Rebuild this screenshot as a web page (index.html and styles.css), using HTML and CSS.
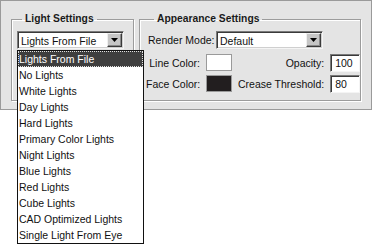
FILE: index.html
```html
<!DOCTYPE html>
<html>
<head>
<meta charset="utf-8">
<link rel="stylesheet" href="styles.css">
</head>
<body>
<div class="panel">
  <fieldset class="group group-light">
    <legend class="legend legend-light">Light Settings</legend>
    <div class="combo combo-light">
      <div class="select">
        <span class="select-value">Lights From File</span>
        <span class="arrow-btn"><svg width="7" height="4" viewBox="0 0 7 4"><path d="M0 0H7L3.5 4Z" fill="#000"/></svg></span>
      </div>
      <ul class="dropdown">
        <li class="item item-active">Lights From File</li>
        <li class="item">No Lights</li>
        <li class="item">White Lights</li>
        <li class="item">Day Lights</li>
        <li class="item">Hard Lights</li>
        <li class="item">Primary Color Lights</li>
        <li class="item">Night Lights</li>
        <li class="item">Blue Lights</li>
        <li class="item">Red Lights</li>
        <li class="item">Cube Lights</li>
        <li class="item">CAD Optimized Lights</li>
        <li class="item">Single Light From Eye</li>
      </ul>
    </div>
  </fieldset>
  <fieldset class="group group-appearance">
    <legend class="legend legend-appearance">Appearance Settings</legend>
    <div class="row-render">
      <span class="label label-render">Render Mode:</span>
      <div class="select select-render">
        <span class="select-value">Default</span>
        <span class="arrow-btn"><svg width="7" height="4" viewBox="0 0 7 4"><path d="M0 0H7L3.5 4Z" fill="#000"/></svg></span>
      </div>
    </div>
    <div class="props">
      <span class="label label-right">Line Color:</span>
      <span class="swatch swatch-white"></span>
      <span class="label label-right">Opacity:</span>
      <span class="field">100</span>
      <span class="label label-right">Face Color:</span>
      <span class="swatch swatch-dark"></span>
      <span class="label label-right">Crease Threshold:</span>
      <span class="field">80</span>
    </div>
  </fieldset>
</div>
</body>
</html>
```

FILE: styles.css
```css
* { box-sizing: border-box; }
html, body { margin: 0; padding: 0; background: #fff; }
body {
  width: 372px;
  height: 246px;
  overflow: hidden;
  font-family: "Liberation Sans", Arial, sans-serif;
  font-size: 10.5px;
  color: #111;
}
.panel {
  height: 110px;
  background: #e4e4e4;
  border: 1px solid #9a9a9a;
  padding: 12px 0 0 10px;
  display: flex;
  gap: 5px;
  align-items: flex-start;
}
.group {
  margin: 0;
  padding: 0;
  min-width: 0;
  height: 88px;
  border: 1px solid #9c9c9c;
  box-shadow: 1px 1px 0 #fff, inset 1px 1px 0 #fff;
}
.group-light { width: 123px; }
.group-appearance { width: 222px; }
.legend {
  font-weight: bold;
  font-size: 10.3px;
  line-height: 12px;
  padding: 0 3px;
  color: #1a1a1a;
}
.legend-light { margin-left: 10px; }
.legend-appearance { margin-left: 14px; }

.combo { position: relative; }
.combo-light { margin: 6px 0 0 5px; width: 107px; }
.select {
  position: relative;
  width: 107px;
  height: 18px;
  background: #fff;
  border-top: 1px solid #7a7a7a;
  border-left: 1px solid #7a7a7a;
  border-right: 1px solid #f4f4f4;
  border-bottom: 1px solid #f4f4f4;
  box-shadow: inset 1px 1px 0 #3a3a3a, inset -1px -1px 0 #cfcfcf;
  display: flex;
  align-items: center;
  padding: 1px 1px 0 3px;
}
.select-value { flex: 1; line-height: 16px; white-space: nowrap; }
.arrow-btn {
  width: 15px;
  height: 14px;
  margin-top: -1px;
  background: #c6c6c6;
  border-top: 1px solid #efefef;
  border-left: 1px solid #efefef;
  border-right: 1px solid #3a3a3a;
  border-bottom: 1px solid #3a3a3a;
  box-shadow: inset -1px -1px 0 #8a8a8a;
  display: flex;
  align-items: center;
  justify-content: center;
}
.dropdown {
  position: absolute;
  top: 19px;
  left: 0;
  width: 127px;
  margin: 0;
  padding: 0;
  list-style: none;
  background: #fff;
  border: 1px solid #111;
  z-index: 5;
}
.item {
  height: 16px;
  line-height: 16px;
  padding-left: 1px;
  white-space: nowrap;
  color: #111;
}
.item-active {
  background: #3e3e3e;
  color: #fff;
  border: 1px dotted #e0e0e0;
  padding-left: 0;
  line-height: 14px;
}

.row-render {
  display: flex;
  align-items: center;
  margin: 6px 0 0 8px;
}
.label { white-space: nowrap; line-height: 18px; }
.label-render { width: 68px; }
.select-render { width: 107px; }
.props {
  display: grid;
  grid-template-columns: 54px 26px 1fr 30px;
  grid-auto-rows: 18px;
  column-gap: 6px;
  row-gap: 3px;
  width: 206px;
  margin: 5px 0 0 6px;
}
.label-right { text-align: right; }
.swatch {
  height: 17px;
  border: 1px solid #9a9a9a;
}
.swatch-white { background: #fff; }
.swatch-dark { background: #221e1f; }
.field {
  height: 18px;
  background: #fff;
  border-top: 1px solid #7a7a7a;
  border-left: 1px solid #7a7a7a;
  border-right: 1px solid #f4f4f4;
  border-bottom: 1px solid #f4f4f4;
  box-shadow: inset 1px 1px 0 #3a3a3a;
  padding: 1px 0 0 4px;
  line-height: 15px;
}
```
